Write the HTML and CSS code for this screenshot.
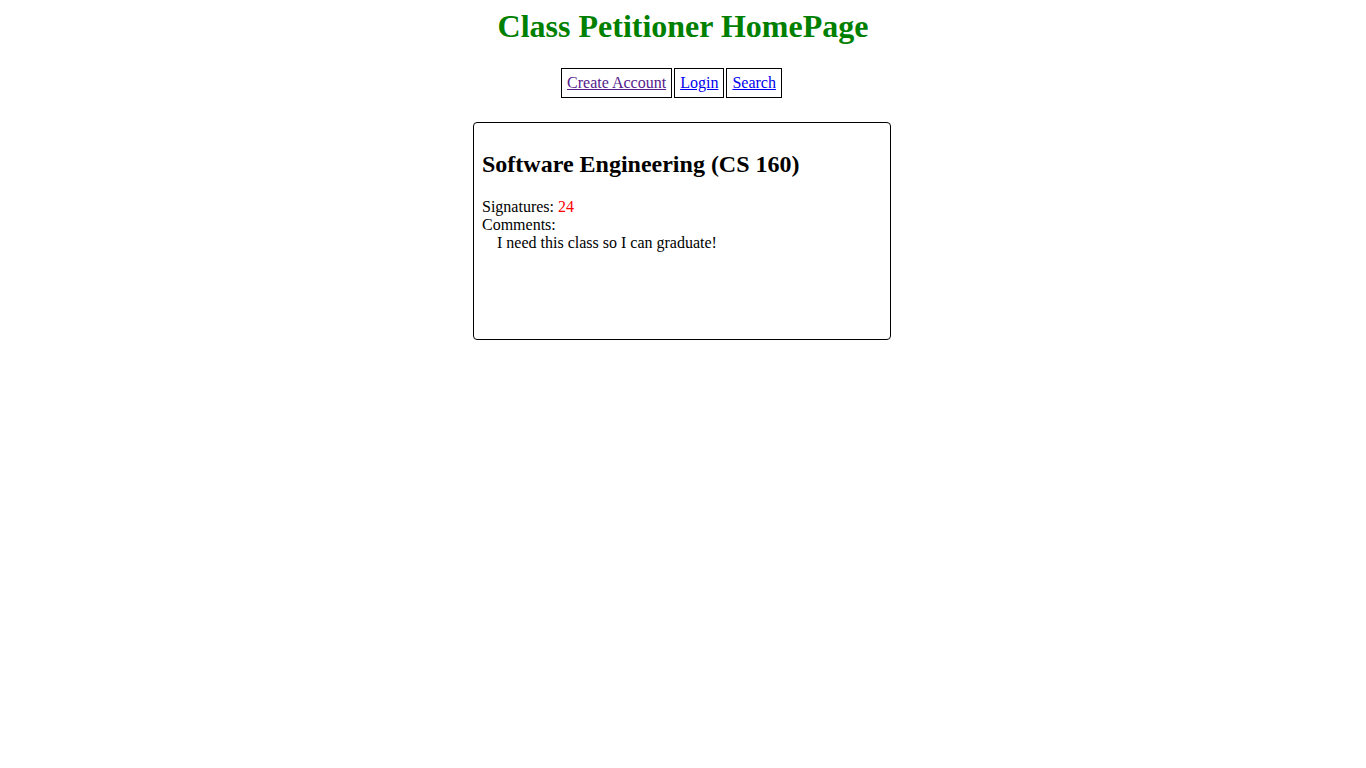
FILE: index.html
```html
<!DOCTYPE html>
<html>
<head>
<meta charset="utf-8">
<title>Class Petitioner HomePage</title>
<link rel="stylesheet" href="styles.css">
</head>
<body>
<h1 class="title">Class Petitioner HomePage</h1>
<div class="nav-wrap">
  <table class="nav">
    <tr>
      <td><a class="visited" href="#create">Create Account</a></td>
      <td><a href="#login">Login</a></td>
      <td><a href="#search">Search</a></td>
    </tr>
  </table>
</div>
<div class="card">
  <h2 class="card-title">Software Engineering (CS 160)</h2>
  <div class="line">Signatures: <span class="count">24</span></div>
  <div class="line">Comments:</div>
  <div class="comment">I need this class so I can graduate!</div>
</div>
</body>
</html>
```

FILE: styles.css
```css
html, body {
  background: #ffffff;
}
body {
  margin: 8px;
  font-family: "Liberation Serif", "Times New Roman", serif;
  font-size: 16px;
  color: #000000;
}
.title {
  margin: 0 0 21.44px 0;
  font-size: 32px;
  font-weight: bold;
  color: #008000;
  text-align: center;
}
.nav-wrap {
  display: flex;
  justify-content: center;
  padding-right: 23px;
}
.nav {
  border-collapse: separate;
  border-spacing: 2px;
}
.nav td {
  border: 1px solid #000000;
  padding: 5px;
}
.nav a {
  color: #0000ee;
  text-decoration: underline;
}
.nav a.visited {
  color: #551a8b;
}
.card {
  box-sizing: border-box;
  width: 418px;
  height: 218px;
  margin: 22px auto 0 auto;
  position: relative;
  left: -1px;
  border: 1px solid #000000;
  border-radius: 4px;
  padding: 8px;
}
.card-title {
  margin: 19.92px 0;
  font-size: 24px;
  font-weight: bold;
}
.count {
  color: #ff0000;
}
.comment {
  padding-left: 15px;
}
```
